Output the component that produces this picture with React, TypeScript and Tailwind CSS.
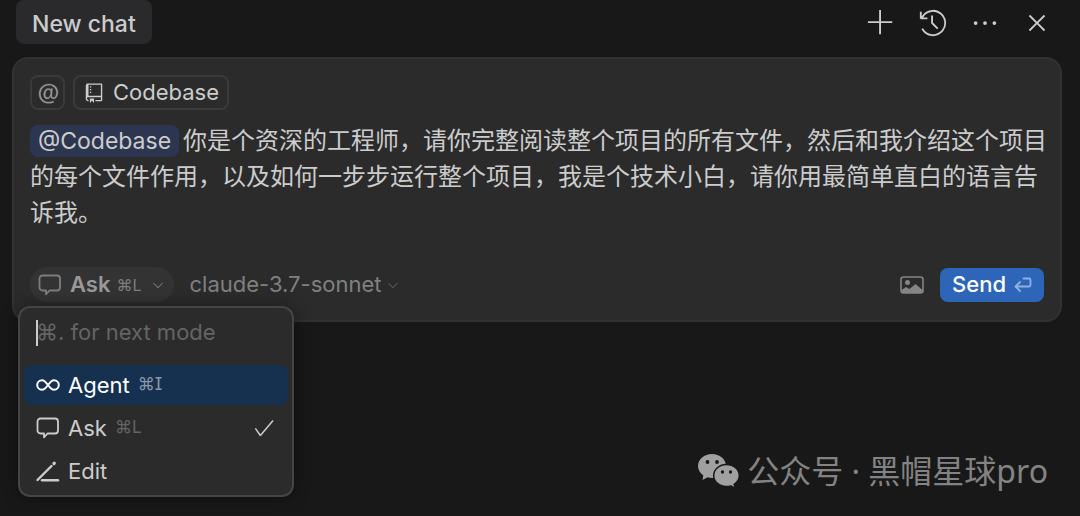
import { useState } from 'react'
import {
  VscAdd,
  VscCheck,
  VscChevronDown,
  VscClose,
  VscEllipsis,
  VscHistory,
  VscMention,
  VscRepo,
} from 'react-icons/vsc'

function CommentIcon({ className }: { className?: string }) {
  return (
    <svg
      viewBox="0 0 24 24"
      fill="none"
      stroke="currentColor"
      strokeWidth="1.800"
      strokeLinejoin="round"
      className={className}
    >
      <path d="M4.500 2.500h14.500a3 3 0 0 1 3 3v9a3 3 0 0 1-3 3h-7.500L8 21.300V17.500H4.500a3 3 0 0 1-3-3v-9a3 3 0 0 1 3-3z" />
    </svg>
  )
}

function InfinityIcon({ className }: { className?: string }) {
  return (
    <svg viewBox="0 0 24 24" fill="none" stroke="currentColor" strokeWidth="2" className={className}>
      <path d="M12 12C9.800 9 8.400 7.200 6 7.200a4.800 4.800 0 0 0 0 9.600c2.400 0 3.800-1.800 6-4.800s3.600-4.800 6-4.800a4.800 4.800 0 0 1 0 9.600c-2.400 0-3.800-1.800-6-4.800z" />
    </svg>
  )
}

function PencilLineIcon({ className }: { className?: string }) {
  return (
    <svg viewBox="0 0 24 24" fill="none" stroke="currentColor" strokeLinecap="round" className={className}>
      <path d="M1.500 21 15.500 7" strokeWidth="2.400" />
      <path d="M18 4.500 18.300 4.200" strokeWidth="3.200" />
      <path d="M6 21.200h16" strokeWidth="2.400" />
    </svg>
  )
}

function ImageIcon({ className }: { className?: string }) {
  return (
    <svg viewBox="0 0 24 18" fill="none" className={className}>
      <rect x="1" y="1" width="22" height="16" rx="2.500" stroke="currentColor" strokeWidth="1.600" />
      <circle cx="7.500" cy="6.500" r="2.500" fill="currentColor" />
      <path d="M1.500 14 6 11l3.500 2L15.500 8l7 6v3h-21z" fill="currentColor" />
    </svg>
  )
}

function ReturnIcon({ className }: { className?: string }) {
  return (
    <svg
      viewBox="0 0 18 16"
      fill="none"
      stroke="currentColor"
      strokeWidth="1.800"
      strokeLinecap="round"
      strokeLinejoin="round"
      className={className}
    >
      <path d="M9.500 1.500H15a1.500 1.500 0 0 1 1.500 1.500v5A1.500 1.500 0 0 1 15 9.500H2M6 5 1.500 9.500 6 14" />
    </svg>
  )
}

function WeChatIcon({ className }: { className?: string }) {
  return (
    <svg viewBox="0 0 42 36" className={className}>
      <path
        fill="currentColor"
        d="M15 1C7.300 1 1 6.200 1 13c0 3.900 2.100 7.200 5.300 9.400L5.500 27l5.200-2.700c1.400.400 2.800.700 4.300.700 7.700 0 14-5.300 14-12S22.700 1 15 1z"
      />
      <path
        fill="currentColor"
        stroke="#181818"
        strokeWidth="1.500"
        d="M29.500 11.500c-7.100 0-12.800 4.900-12.800 11s5.700 11 12.800 11c1.500 0 2.900-.200 4.200-.600l4.600 2.400-1.200-4c3.200-2 5.200-5.200 5.200-8.800 0-6.100-5.700-11-12.800-11z"
      />
      <g fill="#181818">
        <circle cx="10.500" cy="9" r="1.900" />
        <circle cx="20" cy="9" r="1.900" />
        <circle cx="25.500" cy="19" r="1.700" />
        <circle cx="33.500" cy="19" r="1.700" />
      </g>
    </svg>
  )
}

const modes = [
  { name: 'Agent', shortcut: '⌘I', icon: InfinityIcon },
  { name: 'Ask', shortcut: '⌘L', icon: CommentIcon },
  { name: 'Edit', shortcut: '', icon: PencilLineIcon },
]

const actions = [
  { label: 'New', icon: VscAdd },
  { label: 'History', icon: VscHistory },
  { label: 'More', icon: VscEllipsis },
  { label: 'Close', icon: VscClose },
]

export default function App() {
  const [mode, setMode] = useState('Ask')
  const [active, setActive] = useState('Agent')

  return (
    <div className="min-h-screen bg-[#181818] font-['Inter','Noto_Sans_CJK_SC',sans-serif] text-[22px] text-[#cccccc]">
      <header className="flex h-[57px] items-start justify-between pr-7 pl-4">
        <button className="h-11 rounded-lg bg-[#2a2a2c] px-4 pt-1 text-[23px] font-medium">
          New chat
        </button>
        <div className="flex h-[46px] items-center gap-[22px]">
          {actions.map((action) => (
            <button key={action.label} aria-label={action.label}>
              <action.icon className="size-[30px]" />
            </button>
          ))}
        </div>
      </header>

      <main className="mr-[18px] ml-3 rounded-2xl border-2 border-[#323232] bg-[#2b2b2b] px-4 pt-4 pb-[18px]">
        <div className="flex gap-2">
          <button
            aria-label="Add context"
            className="flex size-[35px] items-center justify-center rounded-lg border-2 border-[#3a3a3a] text-[#969696]"
          >
            <VscMention className="size-6 stroke-[0.2]" />
          </button>
          <button className="flex h-[35px] items-center gap-2 rounded-lg border-2 border-[#3a3a3a] px-2">
            <VscRepo className="size-[22px]" />
            Codebase
          </button>
        </div>

        <div
          role="textbox"
          aria-label="Message"
          contentEditable
          suppressContentEditableWarning
          className="mt-[13px] -mr-2 text-[24px] leading-9 outline-none"
        >
          <span className="mr-1 inline-block h-8 rounded-lg bg-[#2c3650] px-2 text-[23px] leading-8">
            @Codebase
          </span>
          你是个资深的工程师，请你完整阅读整个项目的所有文件，然后和我介绍这个项目的每个文件作用，以及如何一步步运行整个项目，我是个技术小白，请你用最简单直白的语言告诉我。
        </div>

        <div className="mt-9 flex items-center justify-between">
          <div className="flex items-center gap-4">
            <div className="relative">
              <button className="flex h-[35px] items-center rounded-full bg-[#333333] px-2 text-[#999999]">
                <CommentIcon className="size-6 text-[#7d7d7d]" />
                <span className="ml-2 font-semibold">{mode}</span>
                <span className="ml-1.5 text-base text-[#7d7d7d]">⌘L</span>
                <VscChevronDown className="ml-2 size-4 text-[#7d7d7d]" />
              </button>

              <div className="absolute top-full -left-3 mt-1 w-[276px] rounded-xl border-2 border-[#454545] bg-[#2b2b2b] p-1 pt-0 shadow-[0_0_16px_rgba(0,0,0,0.4)]">
                <div className="relative flex h-[57px] items-center px-3 pb-2">
                  <input
                    aria-label="Mode"
                    placeholder="⌘. for next mode"
                    className="w-full bg-transparent outline-none placeholder:text-[#646464]"
                  />
                  <span className="absolute left-3 h-[26px] w-0.5 bg-[#cccccc]" />
                </div>
                <div className="flex flex-col gap-[3px]">
                  {modes.map((item) => (
                    <button
                      key={item.name}
                      onMouseEnter={() => setActive(item.name)}
                      onClick={() => setMode(item.name)}
                      className={`flex h-10 w-full items-center rounded-lg px-3 ${
                        active === item.name ? 'bg-[#163150] text-white' : ''
                      }`}
                    >
                      <item.icon className="size-6" />
                      <span className="ml-2">{item.name}</span>
                      <span
                        className={`ml-2 text-[17px] [font-feature-settings:'cv08'] ${
                          active === item.name ? 'text-[#8b98a8]' : 'text-[#646464]'
                        }`}
                      >
                        {item.shortcut}
                      </span>
                      {mode === item.name && <VscCheck className="ml-auto size-6" />}
                    </button>
                  ))}
                </div>
              </div>
            </div>

            <button className="flex items-center gap-1 text-[#808080]">
              claude-3.7-sonnet
              <VscChevronDown className="size-4 text-[#5c5c5c]" />
            </button>
          </div>

          <div className="flex items-center gap-4">
            <button aria-label="Add image" className="text-[#858585]">
              <ImageIcon className="h-[18px] w-6" />
            </button>
            <button className="flex h-[34px] items-center gap-2 rounded-lg bg-[#2d65b9] px-3 font-medium text-white">
              Send
              <ReturnIcon className="h-4 w-[18px] text-[#91b0df]" />
            </button>
          </div>
        </div>
      </main>

      <footer className="mt-[126px] flex items-center justify-end gap-2 pr-8 text-[32px] leading-[46px] text-[#838383]">
        <WeChatIcon className="h-9 w-[42px] text-[#a0a0a0]" />
        <span className="font-['Noto_Sans','Noto_Sans_CJK_SC',sans-serif]">公众号 · 黑帽星球pro</span>
      </footer>
    </div>
  )
}
